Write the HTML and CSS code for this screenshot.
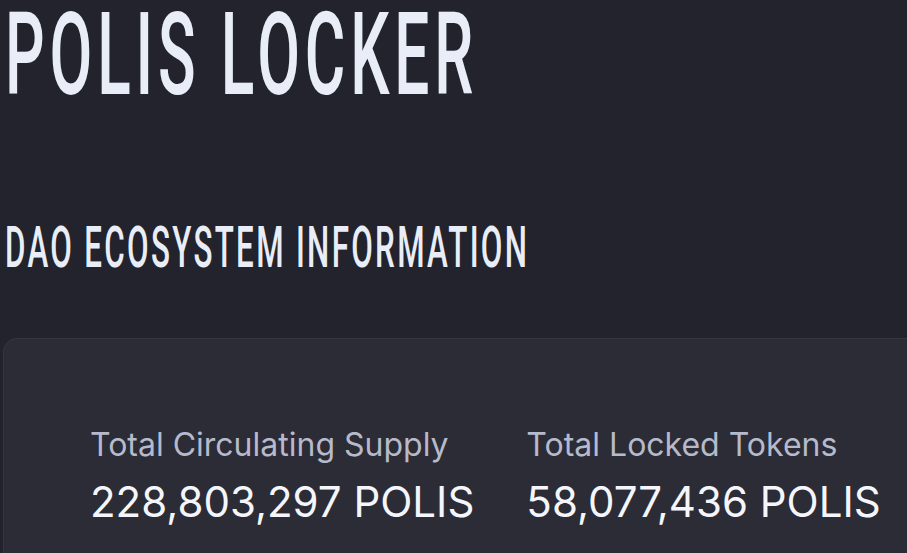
FILE: index.html
```html
<!DOCTYPE html>
<html lang="en">
<head>
<meta charset="utf-8">
<title>Polis Locker</title>
<link rel="stylesheet" href="styles.css">
</head>
<body>
  <main class="page">
    <h1 class="title"><span class="condensed">POLIS LOCKER</span></h1>
    <h2 class="subtitle"><span class="condensed">DAO ECOSYSTEM INFORMATION</span></h2>
    <section class="card">
      <div class="stats">
        <div class="stat">
          <div class="stat-label">Total Circulating Supply</div>
          <div class="stat-value">228,803,297 POLIS</div>
        </div>
        <div class="stat">
          <div class="stat-label">Total Locked Tokens</div>
          <div class="stat-value">58,077,436 POLIS</div>
        </div>
      </div>
    </section>
  </main>
</body>
</html>
```
FILE: styles.css
```css
html, body {
  margin: 0;
  padding: 0;
  background: #22232c;
  height: 100%;
  overflow: hidden;
}

.page {
  padding: 0 0 0 5px;
}

.title, .subtitle {
  margin: 0;
  font-family: "Roboto", "Liberation Sans", sans-serif;
  font-weight: 500;
  color: #e9edf8;
  line-height: 1;
  white-space: nowrap;
}

.condensed {
  display: inline-block;
  transform-origin: 0 0;
  transform: scaleY(1.852);
}

.title {
  font-size: 62.1px;
  height: 115px;
  margin-top: -2px;
}

.title .condensed {
  letter-spacing: 4.86px;
}

.subtitle {
  font-size: 31.32px;
  height: 58px;
  margin-top: 106px;
}

.subtitle .condensed {
  letter-spacing: 2.32px;
}

.card {
  margin: 61px 0 0 -2px;
  width: 1000px;
  height: 400px;
  box-sizing: border-box;
  background: #2b2c36;
  border: 1px solid #353642;
  border-radius: 14px;
  padding: 87px 0 0 86px;
}

.stats {
  display: flex;
  gap: 52px;
  font-family: "Inter", "Liberation Sans", sans-serif;
}

.stat-label {
  font-size: 32px;
  line-height: 38px;
  color: #b6bacb;
  margin-bottom: 11px;
}

.stat-value {
  font-size: 42px;
  line-height: 54px;
  color: #f5f6fb;
}
```
